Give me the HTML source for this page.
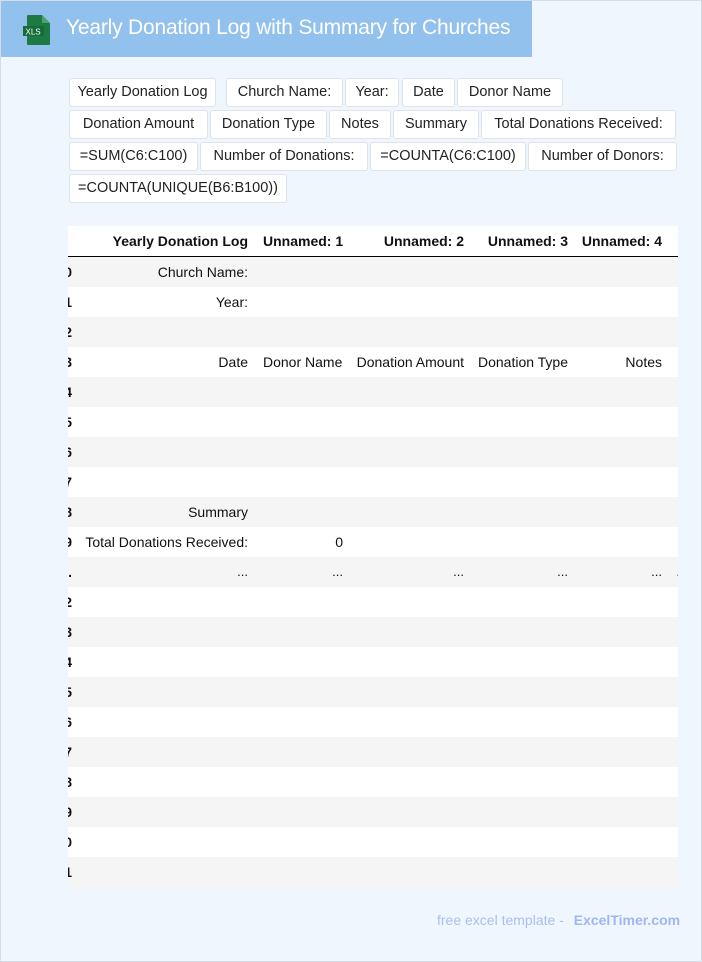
<!DOCTYPE html>
<html><head><style>
*{margin:0;padding:0;box-sizing:border-box}
body{width:702px;height:962px;background:#f0f6fe;position:relative;overflow:hidden;font-family:"Liberation Sans",Arial,sans-serif}
.bd{position:absolute;left:0;top:0;width:702px;height:962px;border:1px solid #d4dee8}
.hdr{position:absolute;left:1px;top:1px;width:531px;height:56px;background:#93c1ed}
.hdr h1{position:absolute;left:65px;top:15px;font-size:21px;font-weight:normal;color:#fff;white-space:nowrap;letter-spacing:-0.2px}
.chips{position:absolute;left:68px;top:78px;width:615px}
.chip{position:absolute;height:29px;background:#fff;border:1px solid #dce3ea;border-radius:3px;font-size:14.5px;color:#222;line-height:27px;text-align:center;white-space:nowrap}
.tbl{position:absolute;left:68px;top:226px;width:610px;height:661px;overflow:hidden;background:#fff}
.row{position:absolute;left:0;width:610px;height:30px;font-size:14px;color:#111}
.row.g{background:#f5f5f5}
.c{position:absolute;top:0;line-height:30px;text-align:right;white-space:nowrap}
.hd{font-weight:bold;font-size:14px}
.foot{position:absolute;top:912px;left:437px;font-size:14px;color:#a9bff0;white-space:nowrap}
.foot b{color:#9fb6f0;margin-left:6px}
</style></head><body>
<div class="bd"></div>
<div class="hdr">
<svg style="position:absolute;left:21px;top:13px" width="30" height="32" viewBox="0 0 30 32"><path d="M6 1h14l8 8v21a1 1 0 0 1-1 1H6a1 1 0 0 1-1-1V2a1 1 0 0 1 1-1z" fill="#1e7a45"/><path d="M20 1v8h8z" fill="#4da36f"/><rect x="1" y="12" width="21" height="10" fill="#156b3a"/><text x="3.5" y="20.5" font-family="Liberation Sans" font-size="8" fill="#fff">XLS</text></svg>
<h1>Yearly Donation Log with Summary for Churches</h1>
</div>
<div class="chips">
<div class="chip" style="left:1px;top:0;width:147px">Yearly Donation Log</div>
<div class="chip" style="left:158px;top:0;width:117px">Church Name:</div>
<div class="chip" style="left:277px;top:0;width:54px">Year:</div>
<div class="chip" style="left:334px;top:0;width:53px">Date</div>
<div class="chip" style="left:389px;top:0;width:106px">Donor Name</div>
<div class="chip" style="left:1px;top:32px;width:139px">Donation Amount</div>
<div class="chip" style="left:142px;top:32px;width:117px">Donation Type</div>
<div class="chip" style="left:261px;top:32px;width:62px">Notes</div>
<div class="chip" style="left:325px;top:32px;width:86px">Summary</div>
<div class="chip" style="left:413px;top:32px;width:195px">Total Donations Received:</div>
<div class="chip" style="left:1px;top:64px;width:129px">=SUM(C6:C100)</div>
<div class="chip" style="left:132px;top:64px;width:168px">Number of Donations:</div>
<div class="chip" style="left:302px;top:64px;width:156px">=COUNTA(C6:C100)</div>
<div class="chip" style="left:460px;top:64px;width:149px">Number of Donors:</div>
<div class="chip" style="left:1px;top:96px;width:218px">=COUNTA(UNIQUE(B6:B100))</div>
</div>
<div class="tbl">
<div class="row hd" style="top:0;height:31px;border-bottom:1px solid #000">
<span class="c" style="right:430px">Yearly Donation Log</span><span class="c" style="left:195px">Unnamed: 1</span><span class="c" style="right:214px">Unnamed: 2</span><span class="c" style="right:110px">Unnamed: 3</span><span class="c" style="right:16px">Unnamed: 4</span></div>
<div class="row g" style="top:31px"><span class="c hd" style="right:606px">0</span><span class="c" style="right:430px">Church Name:</span></div>
<div class="row" style="top:61px"><span class="c hd" style="right:606px">1</span><span class="c" style="right:430px">Year:</span></div>
<div class="row g" style="top:91px"><span class="c hd" style="right:606px">2</span></div>
<div class="row" style="top:121px"><span class="c hd" style="right:606px">3</span><span class="c" style="right:430px">Date</span><span class="c" style="left:195px">Donor Name</span><span class="c" style="right:214px">Donation Amount</span><span class="c" style="right:110px">Donation Type</span><span class="c" style="right:16px">Notes</span></div>
<div class="row g" style="top:151px"><span class="c hd" style="right:606px">4</span></div>
<div class="row" style="top:181px"><span class="c hd" style="right:606px">5</span></div>
<div class="row g" style="top:211px"><span class="c hd" style="right:606px">6</span></div>
<div class="row" style="top:241px"><span class="c hd" style="right:606px">7</span></div>
<div class="row g" style="top:271px"><span class="c hd" style="right:606px">8</span><span class="c" style="right:430px">Summary</span></div>
<div class="row" style="top:301px"><span class="c hd" style="right:606px">9</span><span class="c" style="right:430px">Total Donations Received:</span><span class="c" style="right:335px">0</span></div>
<div class="row g" style="top:331px;font-size:13px"><span class="c hd" style="right:606px">.</span><span class="c" style="right:430px">...</span><span class="c" style="right:335px">...</span><span class="c" style="right:214px">...</span><span class="c" style="right:110px">...</span><span class="c" style="right:16px">...</span><span class="c" style="right:-2px">.</span></div>
<div class="row" style="top:361px"><span class="c hd" style="right:606px">2</span></div>
<div class="row g" style="top:391px"><span class="c hd" style="right:606px">3</span></div>
<div class="row" style="top:421px"><span class="c hd" style="right:606px">4</span></div>
<div class="row g" style="top:451px"><span class="c hd" style="right:606px">5</span></div>
<div class="row" style="top:481px"><span class="c hd" style="right:606px">6</span></div>
<div class="row g" style="top:511px"><span class="c hd" style="right:606px">7</span></div>
<div class="row" style="top:541px"><span class="c hd" style="right:606px">8</span></div>
<div class="row g" style="top:571px"><span class="c hd" style="right:606px">9</span></div>
<div class="row" style="top:601px"><span class="c hd" style="right:606px">0</span></div>
<div class="row g" style="top:631px"><span class="c hd" style="right:606px">1</span></div>
</div>
<div class="foot">free excel template - <b>ExcelTimer.com</b></div>
</body></html>
